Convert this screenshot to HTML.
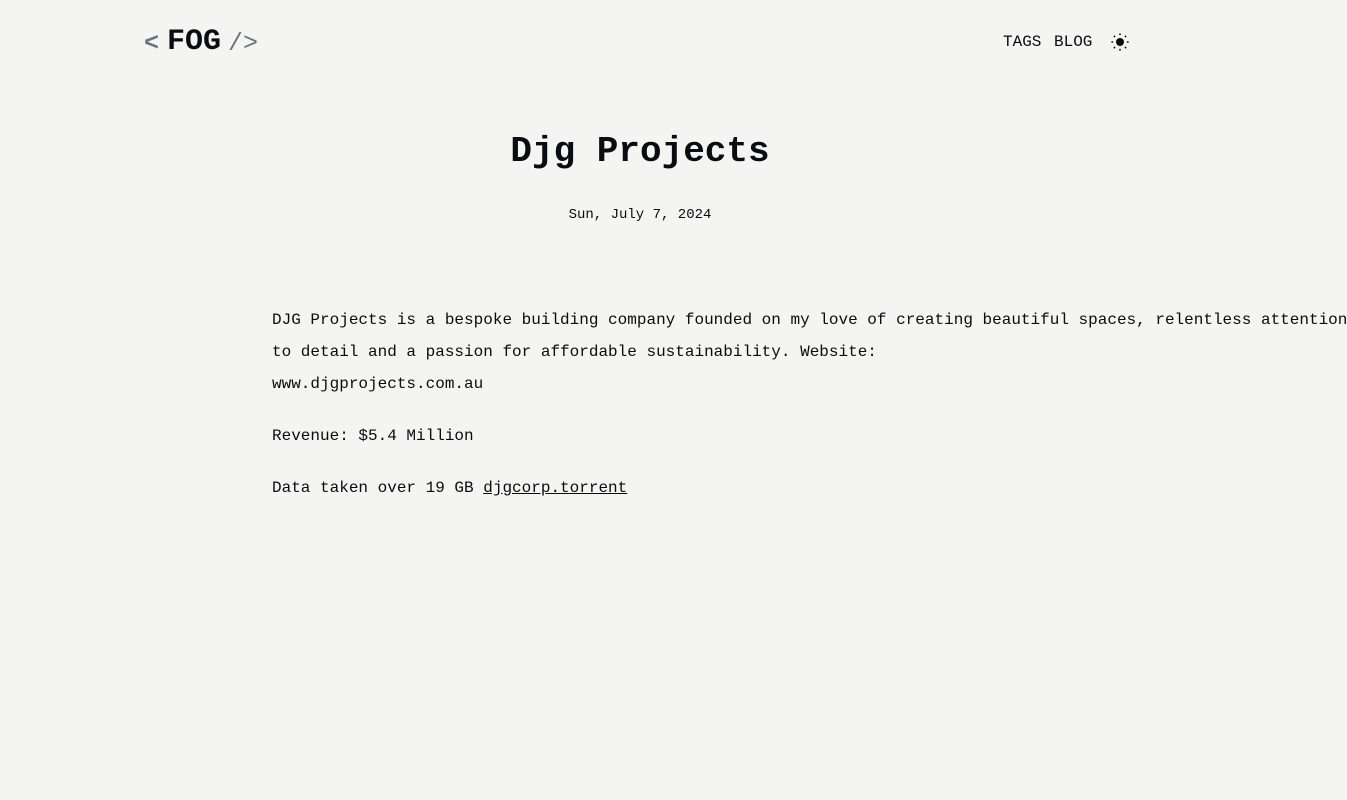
<!DOCTYPE html>
<html><head><style>
body{margin:0;background:#f4f4f2;font-family:"Liberation Mono",monospace;color:#0b0b12;width:1347px;height:800px;overflow:hidden;position:relative}
.a{position:absolute;white-space:nowrap}
.g{color:#6b7280}
p{margin:0 0 20px;font-size:16px;line-height:32px;white-space:nowrap}
a{color:#0b0b12}
</style></head><body>
<div class="a g" style="left:144px;top:24px;font-size:25px;line-height:40px;font-weight:bold">&lt;</div>
<div class="a" style="left:167px;top:22px;font-size:30px;line-height:40px;font-weight:bold">FOG</div>
<div class="a g" style="left:228px;top:24px;font-size:25px;line-height:40px">/&gt;</div>
<div class="a" style="left:1003px;top:32px;font-size:16px;line-height:20px">TAGS</div>
<div class="a" style="left:1054px;top:32px;font-size:16px;line-height:20px">BLOG</div>
<svg class="a" style="left:1111px;top:33px" width="18" height="18" viewBox="0 0 18 18"><circle cx="9" cy="9" r="4" fill="#0b0b12"/><g stroke="#0b0b12" stroke-width="1.6" stroke-linecap="round"><path d="M9 1v.5M9 16.5v.5M1 9h.5M16.5 9h.5M3.3 3.3l.3.3M14.4 14.4l.3.3M3.3 14.7l.3-.3M14.4 3.6l.3-.3"/></g></svg>
<div class="a" style="left:0;width:1280px;text-align:center;top:129px;font-size:36px;line-height:46px;font-weight:bold">Djg Projects</div>
<div class="a" style="left:0;width:1280px;text-align:center;top:206px;font-size:14px;line-height:18px">Sun, July 7, 2024</div>
<div class="a" style="left:272px;top:304px">
<p>DJG Projects is a bespoke building company founded on my love of creating beautiful spaces, relentless attention<br>to detail and a passion for affordable sustainability. Website:<br>www.djgprojects.com.au</p>
<p>Revenue: $5.4 Million</p>
<p>Data taken over 19 GB <a href="#">djgcorp.torrent</a></p>
</div>
</body></html>
